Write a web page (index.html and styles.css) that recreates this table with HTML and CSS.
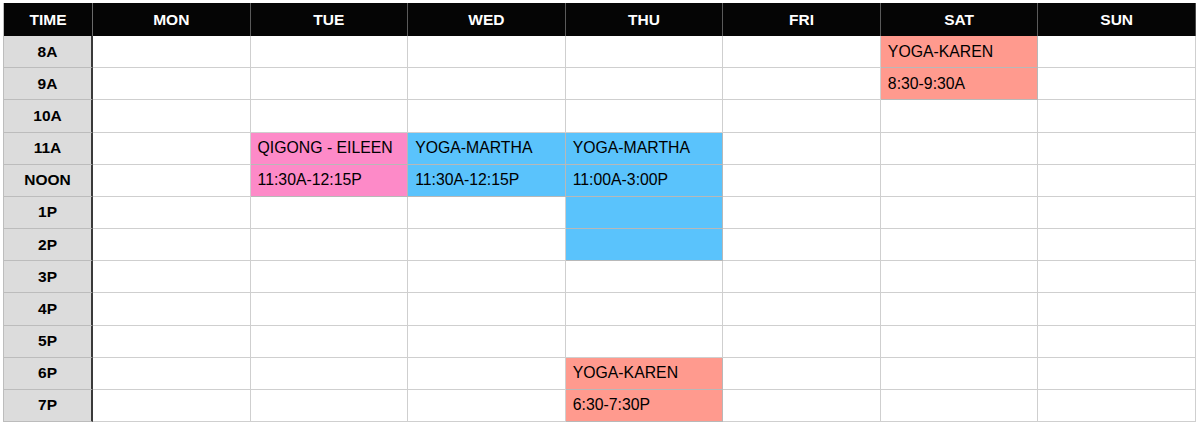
FILE: index.html
```html
<!DOCTYPE html>
<html>
<head>
<meta charset="utf-8">
<link rel="stylesheet" href="styles.css">
</head>
<body>
<div class="schedule">
  <div class="hd time-hd">TIME</div>
  <div class="hd">MON</div>
  <div class="hd">TUE</div>
  <div class="hd">WED</div>
  <div class="hd">THU</div>
  <div class="hd">FRI</div>
  <div class="hd">SAT</div>
  <div class="hd last">SUN</div>

  <div class="tm">8A</div>
  <div class="c"></div><div class="c"></div><div class="c"></div><div class="c"></div><div class="c"></div>
  <div class="c ev salmon">YOGA-KAREN</div><div class="c"></div>

  <div class="tm">9A</div>
  <div class="c"></div><div class="c"></div><div class="c"></div><div class="c"></div><div class="c"></div>
  <div class="c ev salmon">8:30-9:30A</div><div class="c"></div>

  <div class="tm">10A</div>
  <div class="c"></div><div class="c"></div><div class="c"></div><div class="c"></div><div class="c"></div>
  <div class="c"></div><div class="c"></div>

  <div class="tm">11A</div>
  <div class="c"></div>
  <div class="c ev pink">QIGONG - EILEEN</div>
  <div class="c ev blue">YOGA-MARTHA</div>
  <div class="c ev blue">YOGA-MARTHA</div>
  <div class="c"></div><div class="c"></div><div class="c"></div>

  <div class="tm">NOON</div>
  <div class="c"></div>
  <div class="c ev pink">11:30A-12:15P</div>
  <div class="c ev blue">11:30A-12:15P</div>
  <div class="c ev blue">11:00A-3:00P</div>
  <div class="c"></div><div class="c"></div><div class="c"></div>

  <div class="tm">1P</div>
  <div class="c"></div><div class="c"></div><div class="c"></div>
  <div class="c ev blue"></div>
  <div class="c"></div><div class="c"></div><div class="c"></div>

  <div class="tm">2P</div>
  <div class="c"></div><div class="c"></div><div class="c"></div>
  <div class="c ev blue"></div>
  <div class="c"></div><div class="c"></div><div class="c"></div>

  <div class="tm">3P</div>
  <div class="c"></div><div class="c"></div><div class="c"></div><div class="c"></div><div class="c"></div>
  <div class="c"></div><div class="c"></div>

  <div class="tm">4P</div>
  <div class="c"></div><div class="c"></div><div class="c"></div><div class="c"></div><div class="c"></div>
  <div class="c"></div><div class="c"></div>

  <div class="tm">5P</div>
  <div class="c"></div><div class="c"></div><div class="c"></div><div class="c"></div><div class="c"></div>
  <div class="c"></div><div class="c"></div>

  <div class="tm">6P</div>
  <div class="c"></div><div class="c"></div><div class="c"></div>
  <div class="c ev salmon">YOGA-KAREN</div>
  <div class="c"></div><div class="c"></div><div class="c"></div>

  <div class="tm">7P</div>
  <div class="c"></div><div class="c"></div><div class="c"></div>
  <div class="c ev salmon">6:30-7:30P</div>
  <div class="c"></div><div class="c"></div><div class="c"></div>
</div>
</body>
</html>
```
FILE: styles.css
```css
html, body {
  margin: 0;
  padding: 0;
  background: #ffffff;
}

body {
  padding: 3px 0 0 3px;
  font-family: "Liberation Sans", Arial, Helvetica, sans-serif;
  font-size: 15.5px;
  color: #000;
}

.schedule {
  width: 1193px;
  height: 419px;
  display: grid;
  grid-template-columns: 89px repeat(7, 1fr);
  grid-template-rows: 33px repeat(12, 1fr);
  box-sizing: border-box;
  border-left: 1px solid #bdbdbd;
}

.hd {
  background: #050505;
  color: #fff;
  font-weight: bold;
  display: flex;
  align-items: center;
  justify-content: center;
  border-right: 1px solid #5a5a5a;
}

.hd.last {
  border-right: 1px solid #4a4a4a;
}

.time-hd {
  border-right: 1px solid #6a6a6a;
}

.tm {
  background: #dcdcdc;
  font-weight: bold;
  display: flex;
  align-items: center;
  justify-content: center;
  border-right: 2px solid #3a3a3a;
  border-bottom: 1px solid #bcbcbc;
}

.c {
  border-right: 1px solid #cfcfcf;
  border-bottom: 1px solid #cfcfcf;
  display: flex;
  align-items: center;
  padding-left: 7px;
  white-space: nowrap;
  font-size: 15.8px;
}

.ev {
  border-color: #b8b8b8;
}

.pink {
  background: #fd8ac8;
}

.blue {
  background: #5ac3fc;
}

.salmon {
  background: #ff9a8e;
}
```
